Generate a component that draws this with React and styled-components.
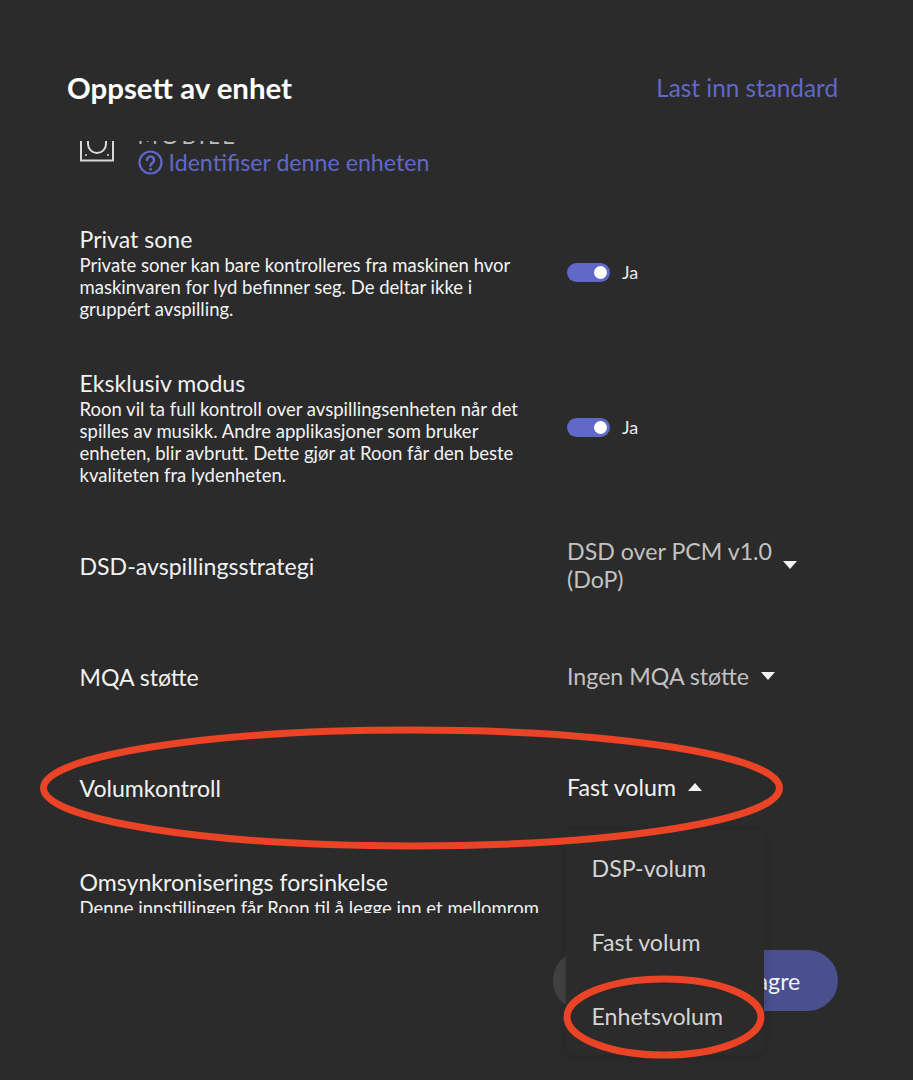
import React from "react";
import styled, { createGlobalStyle } from "styled-components";

const GlobalStyle = createGlobalStyle`
  html, body {
    margin: 0;
    padding: 0;
    background-color: #2b2b2b;
  }
  * {
    box-sizing: border-box;
  }
`;

const Page = styled.div`
  position: relative;
  width: 913px;
  height: 1080px;
  overflow: hidden;
  background-color: #2b2b2b;
  font-family: Lato, "Noto Sans", sans-serif;
  color: #f2f2f2;
`;

const Header = styled.div`
  display: flex;
  justify-content: space-between;
  align-items: center;
  height: 141px;
  padding: 43px 75px 10px 67px;
`;

const Title = styled.h1`
  margin: 0;
  font-size: 29.4px;
  font-weight: 700;
  color: #fff;
`;

const LinkText = styled.span`
  font-size: 24.3px;
  color: #6068c8;
`;

const Scroller = styled.div`
  height: 772px;
  overflow: hidden;
  padding: 0 75px 0 79.5px;
`;

const DeviceRow = styled.div`
  display: flex;
  gap: 24px;
  height: 35px;
  margin-bottom: 46px;
`;

const DeviceIcon = styled.svg`
  width: 34px;
  height: 36px;
  margin-top: -15px;
  flex: none;
`;

const DeviceInfo = styled.div`
  display: flex;
  flex-direction: column;
`;

const DeviceName = styled.div`
  display: flex;
  align-items: flex-end;
  height: 6px;
  margin-bottom: 1px;
  overflow: hidden;
  font-size: 22px;
  line-height: 22px;
  letter-spacing: 3px;
  color: #bdbdbd;
`;

const Identify = styled.div`
  display: flex;
  align-items: center;
  gap: 6px;
  height: 28px;
  font-size: 23.2px;
  color: #6068c8;
`;

const Row = styled.div`
  display: grid;
  grid-template-columns: 487.5px 1fr;
  align-items: center;
  height: ${(props) => props.$height}px;
  margin-top: ${(props) => props.$gap || 0}px;
`;

const Label = styled.div`
  font-size: 23.1px;
  line-height: 28px;
  color: #f2f2f2;
`;

const Description = styled.p`
  margin: 1px 0 0;
  width: ${(props) => props.$width || 450}px;
  font-size: 18.5px;
  line-height: 22px;
  color: #f2f2f2;
`;

const ToggleWrap = styled.div`
  display: flex;
  align-items: center;
  gap: 12px;
  font-size: 18px;
  color: #e8e8e8;
`;

const ToggleTrack = styled.div`
  display: flex;
  align-items: center;
  justify-content: flex-end;
  width: 43px;
  height: 19px;
  padding-right: 3px;
  border-radius: 10px;
  background-color: #6068c8;
`;

const ToggleKnob = styled.div`
  width: 13px;
  height: 13px;
  border-radius: 50%;
  background-color: #fff;
`;

const Select = styled.div`
  display: flex;
  align-items: center;
  gap: ${(props) => props.$gap || 12}px;
  padding-bottom: 2px;
  font-size: 23.2px;
  line-height: 28px;
  color: ${(props) => (props.$open ? "#f2f2f2" : "#c2c2c2")};
`;

const Arrow = styled.span`
  width: 0;
  height: 0;
  flex: none;
  border-left: 7px solid transparent;
  border-right: 7px solid transparent;
  border-top: ${(props) => (props.$up ? "0" : "8px solid #f2f2f2")};
  border-bottom: ${(props) => (props.$up ? "8px solid #f2f2f2" : "0")};
`;

const SelectText = styled.span`
  width: ${(props) => props.$width || "auto"};
`;

const ClippedRow = styled.div`
  margin-top: 25px;
`;

const Footer = styled.div`
  display: flex;
  justify-content: flex-end;
  gap: 23px;
  padding: 37px 75px 0 0;
`;

const FooterButton = styled.button`
  width: 131px;
  height: 61px;
  border: none;
  border-radius: 31px;
  font-family: inherit;
  font-size: 23.2px;
  color: #f2f2f2;
  background-color: ${(props) => (props.$primary ? "#4a4f8e" : "#414141")};
`;

const Menu = styled.div`
  position: absolute;
  left: 566px;
  top: 830px;
  display: flex;
  flex-direction: column;
  width: 198px;
  height: 225px;
  padding-top: 1px;
  border-radius: 6px;
  background-color: #2b2b2b;
  box-shadow: 0 0 10px rgba(0, 0, 0, 0.15);
`;

const MenuItem = styled.div`
  display: flex;
  align-items: center;
  height: 74px;
  padding-left: 25.5px;
  font-size: 23.2px;
  color: #d4d4d4;
`;

const Annotations = styled.svg`
  position: absolute;
  left: 0;
  top: 0;
  width: 913px;
  height: 1080px;
  pointer-events: none;
`;

export default function App() {
  return (
    <Page>
      <GlobalStyle />
      <Header>
        <Title>Oppsett av enhet</Title>
        <LinkText>Last inn standard</LinkText>
      </Header>
      <Scroller>
        <DeviceRow>
          <DeviceIcon viewBox="0 0 34 36" fill="none" stroke="#d8d8d8" strokeWidth="2">
            <path d="M1 0V34.500H33V0" />
            <path d="M8 12v6a9 9 0 0 0 18 0v-6" />
            <circle cx="6" cy="29" r="1" fill="#d8d8d8" stroke="none" />
            <circle cx="28" cy="29" r="1" fill="#d8d8d8" stroke="none" />
          </DeviceIcon>
          <DeviceInfo>
            <DeviceName>MOBILE</DeviceName>
            <Identify>
              <svg width="25" height="25" viewBox="0 0 25 25" fill="none" stroke="#6068c8" strokeWidth="2.200">
                <circle cx="12.500" cy="12.500" r="11" />
                <path d="M9 10a3.500 3.500 0 1 1 5.500 2.900c-1.300.8-2 1.400-2 2.900" strokeLinecap="round" strokeWidth="2.500" />
                <circle cx="12.500" cy="19.300" r="1.500" fill="#6068c8" stroke="none" />
              </svg>
              Identifiser denne enheten
            </Identify>
          </DeviceInfo>
        </DeviceRow>

        <Row $height={100}>
          <div>
            <Label>Privat sone</Label>
            <Description>
              Private soner kan bare kontrolleres fra maskinen hvor maskinvaren for lyd befinner seg. De deltar ikke i gruppért avspilling.
            </Description>
          </div>
          <ToggleWrap>
            <ToggleTrack><ToggleKnob /></ToggleTrack>
            Ja
          </ToggleWrap>
        </Row>

        <Row $height={122} $gap={44}>
          <div>
            <Label>Eksklusiv modus</Label>
            <Description>
              Roon vil ta full kontroll over avspillingsenheten når det spilles av musikk. Andre applikasjoner som bruker enheten, blir avbrutt. Dette gjør at Roon får den beste kvaliteten fra lydenheten.
            </Description>
          </div>
          <ToggleWrap>
            <ToggleTrack><ToggleKnob /></ToggleTrack>
            Ja
          </ToggleWrap>
        </Row>

        <Row $height={111} $gap={22}>
          <Label>DSD-avspillingsstrategi</Label>
          <Select $gap={8}>
            <SelectText $width="208px">DSD over PCM v1.0 (DoP)</SelectText>
            <Arrow />
          </Select>
        </Row>

        <Row $height={111}>
          <Label>MQA støtte</Label>
          <Select>
            Ingen MQA støtte
            <Arrow />
          </Select>
        </Row>

        <Row $height={111}>
          <Label>Volumkontroll</Label>
          <Select $open>
            Fast volum
            <Arrow $up />
          </Select>
        </Row>

        <ClippedRow>
          <Label>Omsynkroniserings forsinkelse</Label>
          <Description $width={470}>
            Denne innstillingen får Roon til å legge inn et mellomrom
          </Description>
        </ClippedRow>
      </Scroller>
      <Footer>
        <FooterButton>Avbryt</FooterButton>
        <FooterButton $primary>Lagre</FooterButton>
      </Footer>
      <Menu>
        <MenuItem>DSP-volum</MenuItem>
        <MenuItem>Fast volum</MenuItem>
        <MenuItem>Enhetsvolum</MenuItem>
      </Menu>
      <Annotations viewBox="0 0 913 1080" fill="none" stroke="#ea4326" strokeWidth="7">
        <ellipse cx="411.500" cy="788" rx="368" ry="58" />
        <ellipse cx="664" cy="1017" rx="97" ry="38" />
      </Annotations>
    </Page>
  );
}
